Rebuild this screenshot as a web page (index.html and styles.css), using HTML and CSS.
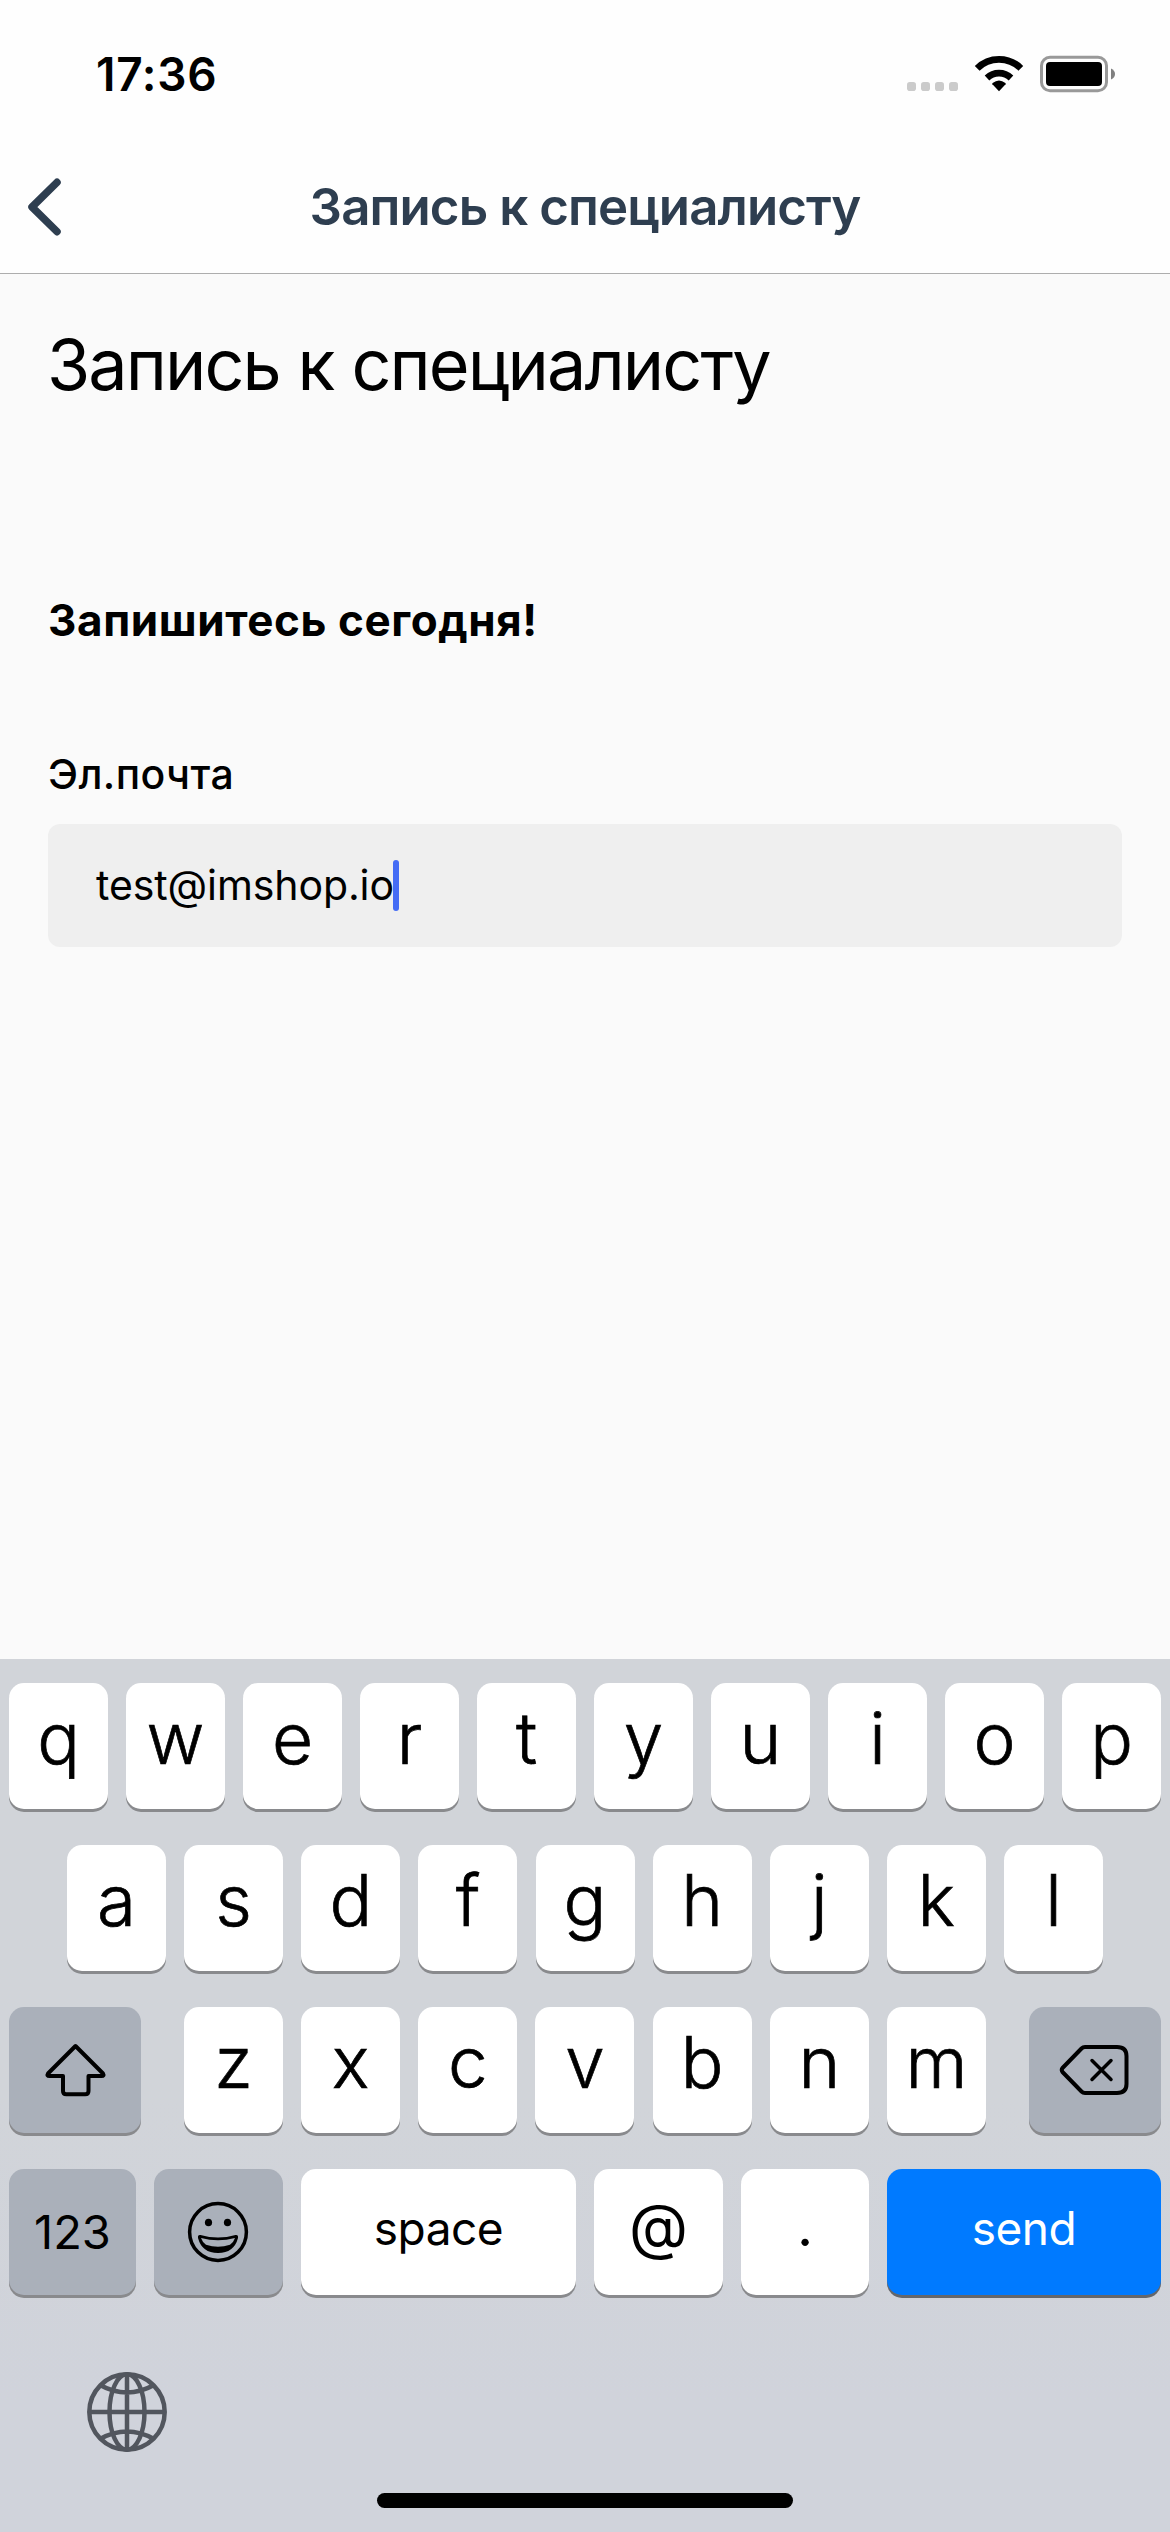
FILE: index.html
```html
<!DOCTYPE html>
<html lang="ru">
<head>
<meta charset="utf-8">
<title>Запись к специалисту</title>
<link rel="stylesheet" href="styles.css">
</head>
<body>
<div class="screen">
  <header class="top">
    <div class="status">
      <span class="time">17:36</span>
      <svg class="status-icons" width="212" height="42" viewBox="904 52 212 42">
        <g fill="#cbcbcb">
          <rect x="907" y="82" width="9" height="9" rx="2.8"/><rect x="921" y="82" width="9" height="9" rx="2.8"/>
          <rect x="935" y="82" width="9" height="9" rx="2.8"/><rect x="949" y="82" width="9" height="9" rx="2.8"/>
        </g>
        <path d="M999 91.2 L992.4 84.3 Q992 83.600 992.600 83.100 Q999 78 1005.400 83.100 Q1006 83.600 1005.600 84.300 Z"/>
        <path d="M987 78 A17.300 17.300 0 0 1 1011 78" fill="none" stroke="#000" stroke-width="6.600"/>
        <path d="M977.200 68.300 A31 31 0 0 1 1020.800 68.300" fill="none" stroke="#000" stroke-width="6.800"/>
        <rect x="1041.500" y="57.300" width="65" height="33.400" rx="8.500" fill="none" stroke="#999" stroke-width="3"/>
        <rect x="1046" y="62" width="56" height="24" rx="4"/>
        <path d="M1111 68.500 Q1115 70.500 1115 74 Q1115 77.500 1111 79.500 Z" fill="#808080"/>
      </svg>
    </div>
    <div class="nav">
      <svg class="back" width="40" height="64" viewBox="0 0 40 64"><path d="M32 7.300 L7 32 L32 56.700"/></svg>
      <span class="nav-title">Запись к специалисту</span>
    </div>
  </header>
  <main class="content">
    <h1 class="title">Запись к специалисту</h1>
    <h2 class="subtitle">Запишитесь сегодня!</h2>
    <label class="label">Эл.почта</label>
    <div class="field"><span class="value">test@imshop.io</span><span class="caret"></span></div>
  </main>
  <section class="keyboard">
    <div class="row">
      <div class="key">q</div><div class="key">w</div><div class="key">e</div><div class="key">r</div><div class="key">t</div><div class="key">y</div><div class="key">u</div><div class="key">i</div><div class="key">o</div><div class="key">p</div>
    </div>
    <div class="row inset">
      <div class="key">a</div><div class="key">s</div><div class="key">d</div><div class="key">f</div><div class="key">g</div><div class="key">h</div><div class="key">j</div><div class="key">k</div><div class="key">l</div>
    </div>
    <div class="row">
      <div class="key wide dark"><svg width="132" height="126" viewBox="9 2007 132 126"><path d="M75.500 2046 L103 2073.500 Q104.500 2076 101.500 2076 H88.500 V2091 Q88.500 2094.300 85.200 2094.300 H66.300 Q63 2094.300 63 2091 V2076 H49.500 Q46.500 2076 48 2073.500 Z"/></svg></div>
      <div class="letters">
        <div class="key">z</div><div class="key">x</div><div class="key">c</div><div class="key">v</div><div class="key">b</div><div class="key">n</div><div class="key">m</div>
      </div>
      <div class="key wide dark"><svg width="132" height="126" viewBox="1029 2007 132 126"><path d="M1085 2047 H1117 Q1126.500 2047 1126.500 2056 V2084 Q1126.500 2093 1117 2093 H1085 Q1083 2093 1081.500 2091.500 L1062.500 2072 Q1061 2070 1062.500 2068 L1081.500 2048.500 Q1083 2047 1085 2047 Z"/><path class="thin" d="M1092 2060.500 L1111 2079.500 M1111 2060.500 L1092 2079.500"/></svg></div>
    </div>
    <div class="row bottom">
      <div class="key dark num">123</div>
      <div class="key dark"><svg width="129" height="126" viewBox="154 2169 129 126"><circle class="thin" cx="218" cy="2232" r="28.400"/><ellipse class="solid" cx="208.500" cy="2222.500" rx="3.600" ry="3.800"/><ellipse class="solid" cx="227.500" cy="2222.500" rx="3.600" ry="3.800"/><path class="solid" fill-rule="evenodd" d="M200.500 2235 Q218 2240 235.500 2235 Q238.500 2234.500 238 2238 Q234 2253 218 2253 Q202 2253 198 2238 Q197.500 2234.500 200.500 2235 Z M201 2238 Q202.500 2242.500 206 2244.700 Q218 2249 230 2244.700 Q233.500 2242.500 235 2238 Q218 2242.500 201 2238 Z"/></svg></div>
      <div class="key word">space</div>
      <div class="key at">@</div>
      <div class="key dot">.</div>
      <div class="key word send">send</div>
    </div>
    <svg class="globe" width="80" height="80" viewBox="-40 -40 80 80"><circle r="37.700"/><path d="M0 -38 V38 M-38 0 H38 M-27 -27 Q0 -12 27 -27 M-27 27 Q0 12 27 27"/><ellipse rx="17.500" ry="37.700"/></svg>
    <div class="home"></div>
  </section>
</div>
</body>
</html>
```
FILE: styles.css
```css
* { box-sizing: border-box; }
body { margin: 0; font-family: Inter, "Liberation Sans", sans-serif; color: #000; }
.screen { width: 1170px; height: 2532px; display: flex; flex-direction: column; background: #fafafa; overflow: hidden; }
.top { height: 274px; background: #fefefe; border-bottom: 1px solid #adadad; }
.status { height: 141px; padding: 52px 54px 0 96px; display: flex; justify-content: space-between; align-items: flex-start; }
.time { font-size: 46px; font-weight: 600; line-height: 45px; letter-spacing: 0.7px; }
.nav { height: 132px; padding: 34px 0 0 25px; display: grid; grid-template-columns: 40px 1fr 65px; }
.back { fill: none; stroke: #2e3e50; stroke-width: 7.500; stroke-linecap: round; stroke-linejoin: round; }
.nav-title { text-align: center; font-size: 51px; line-height: 64px; font-weight: 600; letter-spacing: -0.9px; color: #2e3e50; white-space: nowrap; }
.content { flex: 1; padding: 50px 48px 0; display: flex; flex-direction: column; }
.title { margin: 0 0 0 -1px; font-size: 70px; line-height: 82px; font-weight: 400; letter-spacing: -1.900px; white-space: nowrap; }
.subtitle { margin: 187px 0 0; font-size: 44px; line-height: 54px; font-weight: 700; letter-spacing: 0.600px; }
.label { margin-top: 102px; font-size: 41px; line-height: 50px; font-weight: 500; letter-spacing: 0.400px; }
.field { margin-top: 25px; height: 123px; padding: 0 48px; display: flex; align-items: center; background: #efefef; border-radius: 12px; }
.value { font-size: 41px; line-height: 50px; letter-spacing: -0.1px; margin-top: -1px; }
.caret { width: 6px; height: 51px; margin-left: -1px; border-radius: 3px; background: #446cf5; }
.keyboard { height: 873px; padding: 24px 9px 0; display: flex; flex-direction: column; background: linear-gradient(180deg, #d1d4d9 0 50%, #d0d3db 85%); }
.row { display: flex; justify-content: space-between; height: 126px; margin-bottom: 36px; }
.inset { padding: 0 58px; }
.letters { display: flex; justify-content: space-between; width: 802px; }
.key { width: 99px; height: 126px; border-radius: 15px; background: #fff; box-shadow: 0 3px 0 #898a8d; font-size: 71px; line-height: 110px; font-weight: 300; -webkit-text-stroke: 0.700px #000; text-align: center; }
.wide { width: 132px; }
.dark { background: #aab0ba; }
.key svg { display: block; fill: none; stroke: #000; stroke-width: 4; stroke-linejoin: round; stroke-linecap: round; }
.key svg .thin { stroke-width: 3.500; }
.key svg .solid { fill: #000; stroke: none; }
.bottom { display: grid; grid-template-columns: 127px 129px 275px 129px 128px 274px; }
.bottom .key { width: auto; font-weight: 400; -webkit-text-stroke: 0; }
.bottom .num { font-size: 47px; line-height: 126px; }
.bottom .word { font-size: 46px; line-height: 118px; letter-spacing: -0.500px; }
.bottom .at { font-size: 61px; line-height: 114px; }
.bottom .dot { font-size: 56px; line-height: 114px; }
.send { background: #007aff; color: #fff; box-shadow: 0 3px 0 #64676c; }
.globe { margin: 41px 0 0 78px; fill: none; stroke: #52565e; stroke-width: 4.500; flex: none; }
.home { width: 416px; height: 15px; margin: 41px auto 0; border-radius: 8px; background: #000; }
```
